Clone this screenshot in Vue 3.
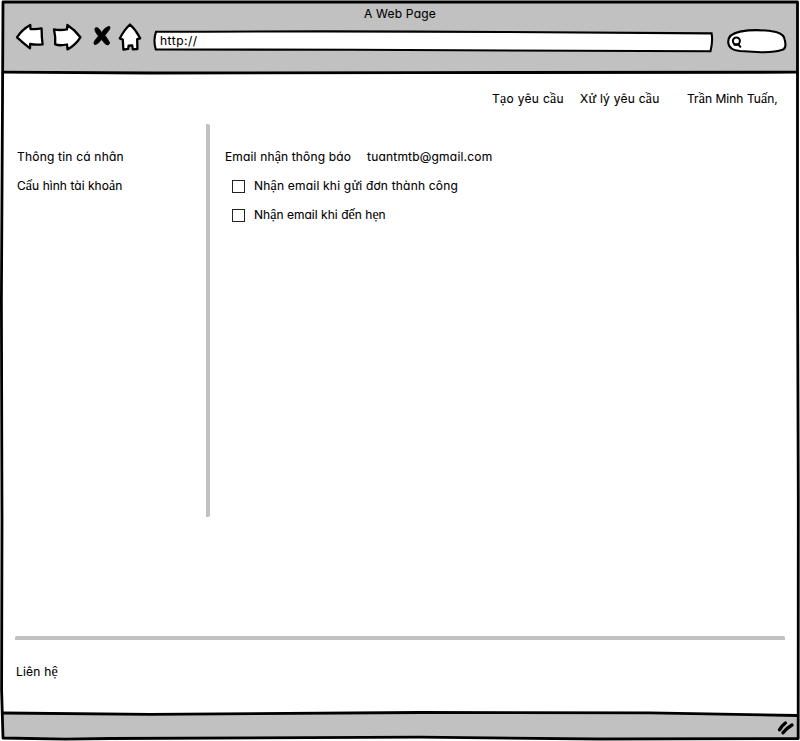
<script setup>
import { h } from 'vue'

const actions = [
  { text: 'Tạo yêu cầu', key: 'create' },
  { text: 'Xử lý yêu cầu', key: 'process' },
  { text: 'Trần Minh Tuấn,', key: 'user' },
]
const menu = [
  { text: 'Thông tin cá nhân', key: 'info' },
  { text: 'Cấu hình tài khoản', key: 'config' },
]
const options = [
  { text: 'Nhận email khi gửi đơn thành công', key: 'sent' },
  { text: 'Nhận email khi đến hẹn', key: 'due' },
]

const marked = /([ạảầấậếệẹửữ])/
const Label = (props) =>
  h('span', { class: 'label' }, props.text.split(marked).filter(Boolean).map((part) =>
    marked.test(part) ? h('span', { class: 'marked' }, part) : part))
Label.props = ['text']
</script>

<template>
  <div class="window">
    <svg class="frame" viewBox="0 0 800 741" aria-hidden="true">
      <path d="M3 2.5 L797 2.5 L797.5 72.5 L350 72.5 L200 73 L3 72Z" fill="#c1c1c1" />
      <path d="M3 713 L150 714.5 L420 712.5 L650 712.8 L798 715.5 L798 738.5 L420 737 L130 738.5 L3 738Z" fill="#c1c1c1" />
      <g fill="none" stroke="#000" stroke-width="2.8" stroke-linejoin="round" stroke-linecap="round">
        <path d="M3 2 L400 2 L797.5 2 L797.5 250 L798.3 500 L798.2 738.5 L600 739 L420 737.2 L110 738.5 L65 739.2 L3 738 L1.6 690 L2 520 L1.4 300 L2.5 100 Z" />
        <path d="M3 72.2 L150 73 L420 72.6 L797 72.2" />
        <path d="M3 713 L150 714.3 L420 712.5 L650 712.8 L797 715.5" />
      </g>
    </svg>

    <header class="browser">
      <div class="title">A Web Page</div>
      <div class="toolbar">
        <svg class="nav" viewBox="0 0 140 32" aria-hidden="true">
          <g fill="#fff" stroke="#000" stroke-width="2.3" stroke-linejoin="round">
            <path d="M7 17.4 Q12 9.5 20.3 5 L20.5 9 Q26 9.6 31.6 8.4 Q31.6 17 32.6 24.3 Q26 25.2 20.2 24 L20 28.3 Q12.5 22.5 7 17.4Z" />
            <path d="M44 9.4 Q50 10.6 57 9.3 L57.4 5 Q65 10 70.4 17.3 Q65.5 25 57.5 29.4 L57 24.5 Q50 26 45.2 24.4 Q45.8 17 44 9.4Z" />
            <path d="M120 4.5 Q126 10 130.2 18.3 L127.2 19.2 L127.4 29 L122.8 29.3 L122.2 25.4 L118.6 25.6 L118.2 28.9 L113.4 29.6 L112.8 19.6 L109.8 18.5 Q114 10 120 4.5Z" />
          </g>
          <path d="M85 8.2 Q87.8 5.8 91.6 12.4 Q95 7 99 6.2 Q101.2 7 98.8 10.4 L95 15.4 Q98.4 19.8 99.8 23 Q98.6 26.4 95.6 24.2 L91.4 19.6 Q88 24.6 84.8 24.8 Q82.6 23.4 85.2 20 L88.4 16 Q84 11 85 8.2Z" fill="#000" stroke="#000" stroke-width=".7" />
        </svg>
        <div class="address">
          <svg class="shape" viewBox="0 0 562 24" aria-hidden="true">
            <path d="M3 2.8 Q200 1.9 350 3 T558.6 4.4 Q560 12 557.5 22.3 Q380 21.5 200 20.8 T2.8 20.5 Q0 11 3 2.8Z" fill="#fff" stroke="#000" stroke-width="2.1" />
          </svg>
          <span class="url">http://</span>
        </div>
        <svg class="search" viewBox="0 0 62 26" aria-hidden="true">
          <path d="M14 3.6 Q31 .5 50 4 Q58.5 6 59 13 Q60.5 20 57 21.5 Q49 24.5 35 24.2 L14 23 Q2.5 22 2.2 14 Q2 6 14 3.6Z" fill="#fff" stroke="#000" stroke-width="2.1" />
          <circle cx="10.4" cy="13" r="3.5" fill="#fff" stroke="#000" stroke-width="2" />
          <path d="M8.4 16.8 L12.6 16.6 L14.4 18.8" fill="none" stroke="#000" stroke-width="2" stroke-linecap="round" />
        </svg>
      </div>
    </header>

    <nav class="actions">
      <Label v-for="a in actions" :key="a.key" :text="a.text" :class="a.key" />
    </nav>

    <main class="body">
      <aside class="menu">
        <Label v-for="m in menu" :key="m.key" :text="m.text" :class="m.key" />
      </aside>
      <section class="content">
        <div class="email">
          <Label text="Email nhận thông báo" class="caption" />
          <Label text="tuantmtb@gmail.com" class="address-text" />
        </div>
        <div v-for="o in options" :key="o.key" class="option">
          <span class="box"></span>
          <Label :text="o.text" :class="o.key" />
        </div>
      </section>
    </main>

    <footer class="footer">
      <Label text="Liên hệ" class="contact" />
    </footer>

    <div class="status">
      <svg class="grip" viewBox="0 0 18 16" aria-hidden="true">
        <path d="M2.5 9.7 Q4 6.5 8.4 3 M6 12.8 Q9 8.5 15 5" fill="none" stroke="#000" stroke-width="3.4" stroke-linecap="round" />
      </svg>
    </div>
  </div>
</template>

<style>
body { background: #fff; }
</style>

<style scoped>
.window {
  position: relative;
  display: flex;
  flex-direction: column;
  width: 800px;
  height: 741px;
  overflow: hidden;
  font-family: Inter, "Noto Sans", sans-serif;
  font-size: 12px;
  line-height: 18px;
  letter-spacing: .2px;
  color: #000;
  font-feature-settings: "cv11";
  -webkit-text-stroke: .1px #000;
}
.frame { position: absolute; inset: 0; width: 800px; height: 741px; }
.browser, .actions, .body, .footer, .status { position: relative; box-sizing: border-box; }
.browser { height: 73px; padding-top: 5px; }
.title { height: 15px; line-height: 18px; text-align: center; }
.toolbar { display: flex; align-items: flex-start; padding-left: 10px; }
.nav { width: 140px; height: 32px; flex: none; }
.address { position: relative; width: 562px; height: 24px; margin: 9px 0 0 3px; }
.shape { position: absolute; inset: 0; width: 562px; height: 24px; }
.url { position: relative; display: block; padding-left: 7px; line-height: 23px; letter-spacing: .5px; }
.search { width: 62px; height: 26px; margin: 8px 0 0 11px; }
.label { white-space: nowrap; }
.label :deep(.marked) { font-family: "Liberation Serif", serif; font-size: 14px; line-height: 1; }
.actions { display: flex; height: 51px; padding: 17px 0 0 492px; }
.actions .create { width: 88px; letter-spacing: .3px; }
.actions .process { width: 107px; letter-spacing: .25px; }
.actions .user { letter-spacing: .03px; }
.body { display: flex; height: 393px; }
.menu {
  display: flex;
  flex-direction: column;
  gap: 11px;
  width: 210px;
  box-sizing: border-box;
  padding: 24px 0 0 17px;
  border-right: 4px solid #c1c1c1;
  border-radius: 2px;
}
.menu .config { letter-spacing: .04px; }
.content { display: flex; flex-direction: column; gap: 11px; padding: 24px 0 0 15px; }
.email { display: flex; height: 18px; }
.email .caption { width: 142px; letter-spacing: .15px; }
.option { display: flex; align-items: center; height: 18px; padding-left: 7px; }
.option .sent { letter-spacing: .2px; }
.option .due { letter-spacing: .02px; }
.box { width: 13px; height: 13px; box-sizing: border-box; border: 1px solid #222; margin: 1px 9px 0 0; }
.footer { height: 78px; margin: 119px 15px 0; padding: 23px 0 0 1px; border-top: 4px solid #c1c1c1; border-radius: 2px; }
.status { display: flex; justify-content: flex-end; padding: 6px 5px 0 0; }
.grip { width: 18px; height: 16px; }
</style>
